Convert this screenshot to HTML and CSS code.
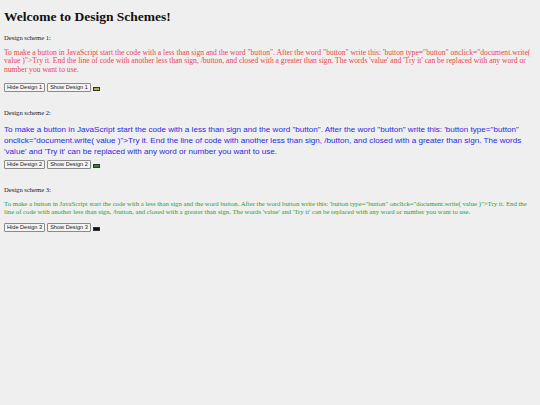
FILE: index.html
```html
<!DOCTYPE html>
<html>
<head>
<meta charset="utf-8">
<link rel="stylesheet" href="styles.css">
</head>
<body>
<h1 class="title">Welcome to Design Schemes!</h1>

<div class="scheme">
  <div class="label">Design scheme 1:</div>
  <p class="text text1">To make a button in JavaScript start the code with a less than sign and the word "button". After the word "button" write this: 'button type="button" onclick="document.write( value )"&gt;Try it. End the line of code with another less than sign, /button, and closed with a greater than sign. The words 'value' and 'Try it' can be replaced with any word or number you want to use.</p>
  <div class="controls">
    <button class="btn">Hide Design 1</button>
    <button class="btn">Show Design 1</button>
    <span class="swatch swatch1"></span>
  </div>
</div>

<div class="scheme">
  <div class="label">Design scheme 2:</div>
  <p class="text text2">To make a button in JavaScript start the code with a less than sign and the word "button". After the word "button" write this: 'button type="button" onclick="document.write( value )"&gt;Try it. End the line of code with another less than sign, /button, and closed with a greater than sign. The words 'value' and 'Try it' can be replaced with any word or number you want to use.</p>
  <div class="controls">
    <button class="btn">Hide Design 2</button>
    <button class="btn">Show Design 2</button>
    <span class="swatch swatch2"></span>
  </div>
</div>

<div class="scheme">
  <div class="label">Design scheme 3:</div>
  <p class="text text3">To make a button in JavaScript start the code with a less than sign and the word button. After the word button write this: 'button type="button" onclick="document.write( value )"&gt;Try it. End the line of code with another less than sign, /button, and closed with a greater than sign. The words 'value' and 'Try it' can be replaced with any word or number you want to use.</p>
  <div class="controls">
    <button class="btn">Hide Design 3</button>
    <button class="btn">Show Design 3</button>
    <span class="swatch swatch3"></span>
  </div>
</div>
</body>
</html>
```
FILE: styles.css
```css
html, body {
  background: #efefef;
}
body {
  margin: 0;
  padding: 0 4px;
  font-family: "Liberation Serif", "Times New Roman", serif;
  color: #222;
}
.title {
  font-size: 13.5px;
  font-weight: bold;
  line-height: 17px;
  margin: 7.5px 0 0;
  color: #111;
}
.scheme {
  margin-top: 8px;
}
.scheme + .scheme {
  margin-top: 16.5px;
}
.label {
  font-size: 6.6px;
  line-height: 9px;
  color: #1a1a1a;
}
.text {
  margin: 0;
}
.text1 {
  font-family: "Liberation Serif", "Times New Roman", serif;
  font-size: 7.6px;
  line-height: 8.5px;
  color: #e8474c;
  margin: 7px 0 8.5px;
}
.text2 {
  font-family: "Liberation Sans", Arial, sans-serif;
  font-size: 8.1px;
  line-height: 11px;
  color: #2a2ae0;
  margin: 7px 0 2.5px;
}
.text3 {
  font-family: "Liberation Serif", "Times New Roman", serif;
  font-size: 6.75px;
  line-height: 8px;
  color: #2e9e2e;
  margin: 5.5px 0 7px;
}
.controls {
  display: flex;
  align-items: center;
  gap: 2px;
}
.btn {
  font-family: "Liberation Sans", Arial, sans-serif;
  font-size: 5.6px;
  line-height: 7px;
  padding: 0 2px;
  height: 9px;
  background: #f4f4f4;
  border: 1px solid #8a8a8a;
  border-radius: 1px;
  color: #222;
  margin: 0;
}
.swatch {
  display: inline-block;
  width: 5px;
  height: 2px;
  border: 1px solid #333;
  margin-left: 0;
  margin-top: 3px;
}
.swatch1 { background: #b8b040; }
.swatch2 { background: #2f8a2f; }
.swatch3 { background: #111; }
```
